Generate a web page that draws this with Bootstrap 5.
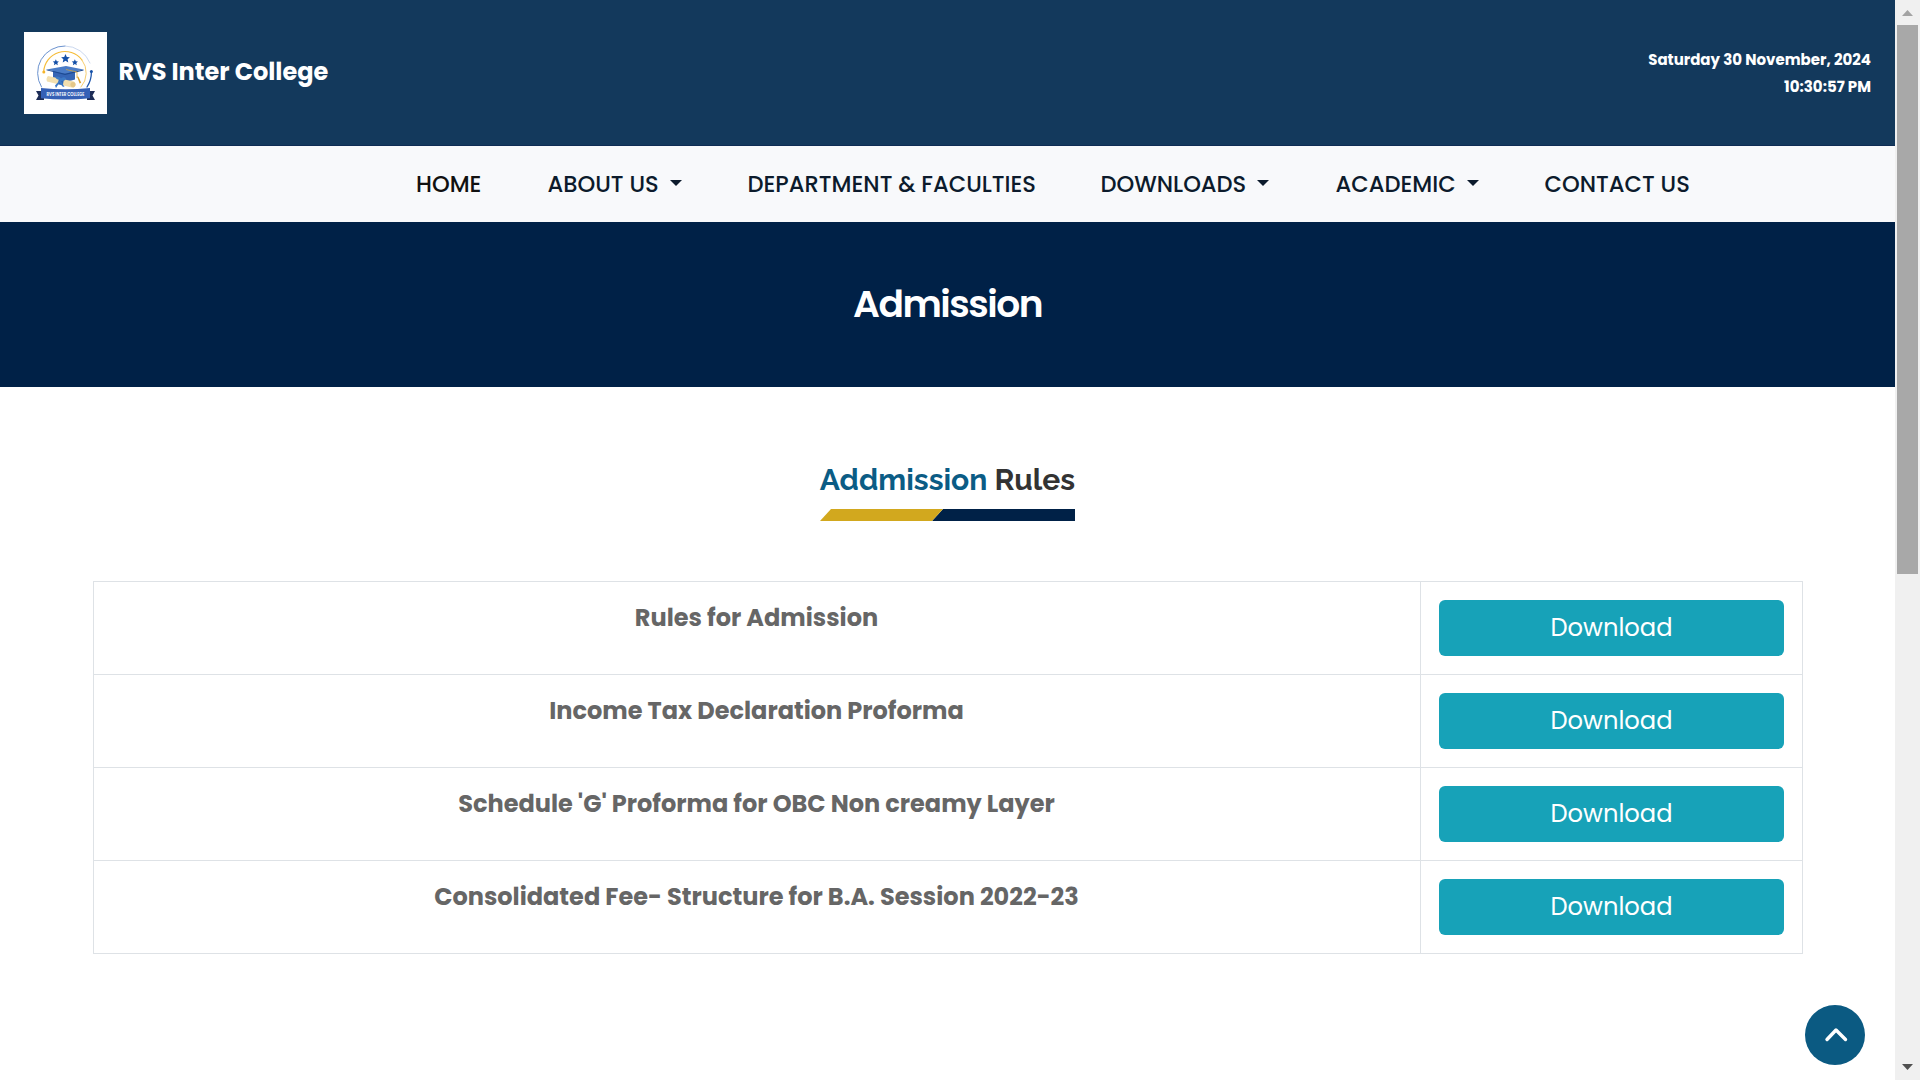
<!DOCTYPE html>
<html lang="en">
<head>
<meta charset="utf-8">
<meta name="viewport" content="width=device-width, initial-scale=1">
<title>RVS Inter College</title>
<link href="https://cdn.jsdelivr.net/npm/bootstrap@5.3.0/dist/css/bootstrap.min.css" rel="stylesheet">
<style>
body{font-family:Poppins,Inter,"Liberation Sans",sans-serif;height:1080px;overflow:hidden;color:#666;background:#fff}
.page-body{width:1895px;height:1080px}
.top-strip{height:146px;background:#13395c;border-bottom:1px solid #0e2c54;padding:1px 24px 0}
.brand-logo{width:83px;height:82px;background:#fff}
.brand-name{font-size:24px;font-weight:700;line-height:36px;margin:0 0 2px 11.5px;color:#fff}
.clock-text{font-size:15px;font-weight:700;line-height:27px;color:#fff}
.menu-strip{height:76px;background:#f8f9fb;padding-left:416px}
.menu-strip .nav-link{font-size:22.6px;font-weight:500;line-height:33px;padding:0;color:#0c1b2c;white-space:nowrap}
.menu-strip .nav-link.active{color:#111}
.menu-strip .dropdown-toggle::after{border-width:6px 6px 0;margin-left:11px;vertical-align:6px}
.menu-strip .nav-item:nth-child(1){width:131.5px}
.menu-strip .nav-item:nth-child(2){width:200px}
.menu-strip .nav-item:nth-child(3){width:353px}
.menu-strip .nav-item:nth-child(4){width:235px}
.menu-strip .nav-item:nth-child(5){width:209px}
.page-banner{height:165px;background:#002147;padding-bottom:2px}
.page-banner h1{font-size:37.6px;font-weight:600;line-height:46px;letter-spacing:-1.5px;margin:0;color:#fff}
.section-head{font-family:Raleway,Lato,sans-serif;font-size:30px;font-weight:700;line-height:36px;color:#333;margin:0}
.section-head span{color:#0b5c85}
.section-wrap{padding:75px 92px 0 93px}
.head-group{padding-right:1px}
.head-rule{width:255px;height:12px;margin-top:11px}
.files-table{margin:60px 0 0;border-color:#dee2e6;table-layout:fixed}
.files-table td{padding:18px;height:93px;vertical-align:top;color:#666}
.files-table .file-name{font-size:24px;font-weight:700;line-height:36px;text-align:center;padding-right:19px}
.btn-teal,.btn-teal:hover{background:#17a2b8;border:0;color:#fff}
.btn-teal{font-size:24.2px;line-height:36px;padding:10px;border-radius:6px;display:block}
.to-top{position:absolute;left:1805px;top:1005px;width:60px;height:60px;background:#0b5a82}
.scroll-rail{width:25px;height:1080px;background:#f0f0f0}
.scroll-thumb{width:21px;height:549px;background:#a8a8a8;margin-left:2px}
</style>
</head>
<body>
<div class="d-flex">
<div class="page-body">
  <header class="top-strip d-flex align-items-center justify-content-between">
    <div class="d-flex align-items-center">
      <svg class="brand-logo" viewBox="24 32 83 82" role="img" aria-label="College crest">
        <g fill="none" stroke-linecap="round">
          <path d="M41.500 87A27 27 0 0 1 65 46" stroke="#5a86c8" stroke-width=".9"/>
          <path d="M65 46A27 27 0 0 1 90 63" stroke="#bccdea" stroke-width=".8"/>
          <path d="M91.400 72Q91.500 80 87 87" stroke="#2158ad" stroke-width="1.300"/>
          <path d="M43.700 72A21.300 21.300 0 0 1 82 60" stroke="#f5bd3a" stroke-width="1.200"/>
          <path d="M82 60A21.300 21.300 0 0 1 81 87" stroke="#f6cd70" stroke-width="1"/>
        </g>
        <circle cx="43.800" cy="72" r="1.500" fill="#f5b52a"/>
        <circle cx="91.400" cy="71.500" r="1.500" fill="#1450a8"/>
        <g fill="#1450a8">
          <path id="star" d="M65.500 54l1.300 2.900 3.100.3-2.300 2.100.7 3.100-2.800-1.600-2.800 1.600.7-3.100-2.300-2.100 3.100-.3z"/>
          <use href="#star" transform="translate(10 21.500) scale(.7)"/>
          <use href="#star" transform="translate(29 21.500) scale(.7)"/>
        </g>
        <path d="M53 71h22v8.500q-11 4-22 0z" fill="#3565b5"/>
        <path d="M46.500 69.500L66 66l17.500 3.500L65 73.800z" fill="#4a7cc7"/>
        <path d="M46.500 69.500L65 73.800l18.500-4.300v.9L65 75l-18.500-4.700z" fill="#1d4a92"/>
        <path d="M66 69.500l11 2.500v6" fill="none" stroke="#e0a52c" stroke-width=".7"/>
        <path d="M77 76.500l1.400.3 2.800 6-1.600.6z" fill="#dba12d"/>
        <path d="M48 76l26 5.500q3 3-.5 6.500L47 81.500q-1.300-3 1-5.500z" fill="#f2dfae"/>
        <circle cx="73" cy="84.500" r="2.600" fill="#e4c789"/>
        <path d="M59 78l5 1-1.200 6.200-5-1z" fill="#2f66b8"/>
        <path d="M60 80q-5-1-4.500-3.500 4-.5 5.500 2 3-2.500 5 0-1 3-5 2.500l3.500 6-2-.5-3-4-3.500 5.500-1-2.500z" fill="#3c7ac6"/>
        <path d="M36 91h8v9h-8l2.500-4.500zM95 91h-8v9h8l-2.500-4.500z" fill="#1e2d57"/>
        <path d="M41 88q24.500 2.500 49 0v10.300q-24.500 2.500-49 0z" fill="#3560b6"/>
        <text x="65.500" y="96" font-family="Poppins,Inter,sans-serif" font-size="4.400" font-weight="600" fill="#fff" text-anchor="middle" textLength="38" lengthAdjust="spacingAndGlyphs">RVS INTER COLLEGE</text>
      </svg>
      <div class="brand-name">RVS Inter College</div>
    </div>
    <div class="clock-text text-end">Saturday 30 November, 2024<br>10:30:57 PM</div>
  </header>
  <nav class="menu-strip d-flex align-items-center">
    <ul class="nav flex-nowrap">
      <li class="nav-item"><a class="nav-link active" href="#">HOME</a></li>
      <li class="nav-item"><a class="nav-link dropdown-toggle" href="#">ABOUT US</a></li>
      <li class="nav-item"><a class="nav-link" href="#">DEPARTMENT &amp; FACULTIES</a></li>
      <li class="nav-item"><a class="nav-link dropdown-toggle" href="#">DOWNLOADS</a></li>
      <li class="nav-item"><a class="nav-link dropdown-toggle" href="#">ACADEMIC</a></li>
      <li class="nav-item"><a class="nav-link" href="#">CONTACT US</a></li>
    </ul>
  </nav>
  <section class="page-banner d-flex align-items-center justify-content-center"><h1>Admission</h1></section>
  <section class="section-wrap">
    <div class="head-group d-flex flex-column align-items-center">
      <h2 class="section-head"><span>Addmission</span> Rules</h2>
      <svg class="head-rule" viewBox="0 0 255 12"><path d="M123 0H255V12H112z" fill="#002147"/><path d="M11 0H123L112 12H0z" fill="#d2a81e"/></svg>
    </div>
    <table class="table table-bordered files-table">
      <colgroup><col><col width="382"></colgroup>
      <tbody>
        <tr><td class="file-name">Rules for Admission</td><td><a class="btn btn-teal" href="#">Download</a></td></tr>
        <tr><td class="file-name">Income Tax Declaration Proforma</td><td><a class="btn btn-teal" href="#">Download</a></td></tr>
        <tr><td class="file-name">Schedule 'G' Proforma for OBC Non creamy Layer</td><td><a class="btn btn-teal" href="#">Download</a></td></tr>
        <tr><td class="file-name">Consolidated Fee- Structure for B.A. Session 2022-23</td><td><a class="btn btn-teal" href="#">Download</a></td></tr>
      </tbody>
    </table>
  </section>
</div>
<div class="scroll-rail d-flex flex-column justify-content-between">
  <div>
    <svg class="d-block" width="25" height="25" viewBox="0 0 25 25"><path d="M7 16h11l-5.500-6z" fill="#a3a3a3"/></svg>
    <div class="scroll-thumb"></div>
  </div>
  <svg class="d-block" width="25" height="25" viewBox="0 0 25 25"><path d="M7 9h11l-5.500 6z" fill="#505050"/></svg>
</div>
</div>
<a class="to-top rounded-circle" href="#" aria-label="Back to top">
  <svg class="d-block" width="60" height="60" viewBox="0 0 60 60"><path d="M22 34.500l9-9.500 9.500 9.500" fill="none" stroke="#fff" stroke-width="3.400" stroke-linecap="round" stroke-linejoin="round"/></svg>
</a>
<script src="https://cdn.jsdelivr.net/npm/bootstrap@5.3.0/dist/js/bootstrap.bundle.min.js"></script>
</body>
</html>
